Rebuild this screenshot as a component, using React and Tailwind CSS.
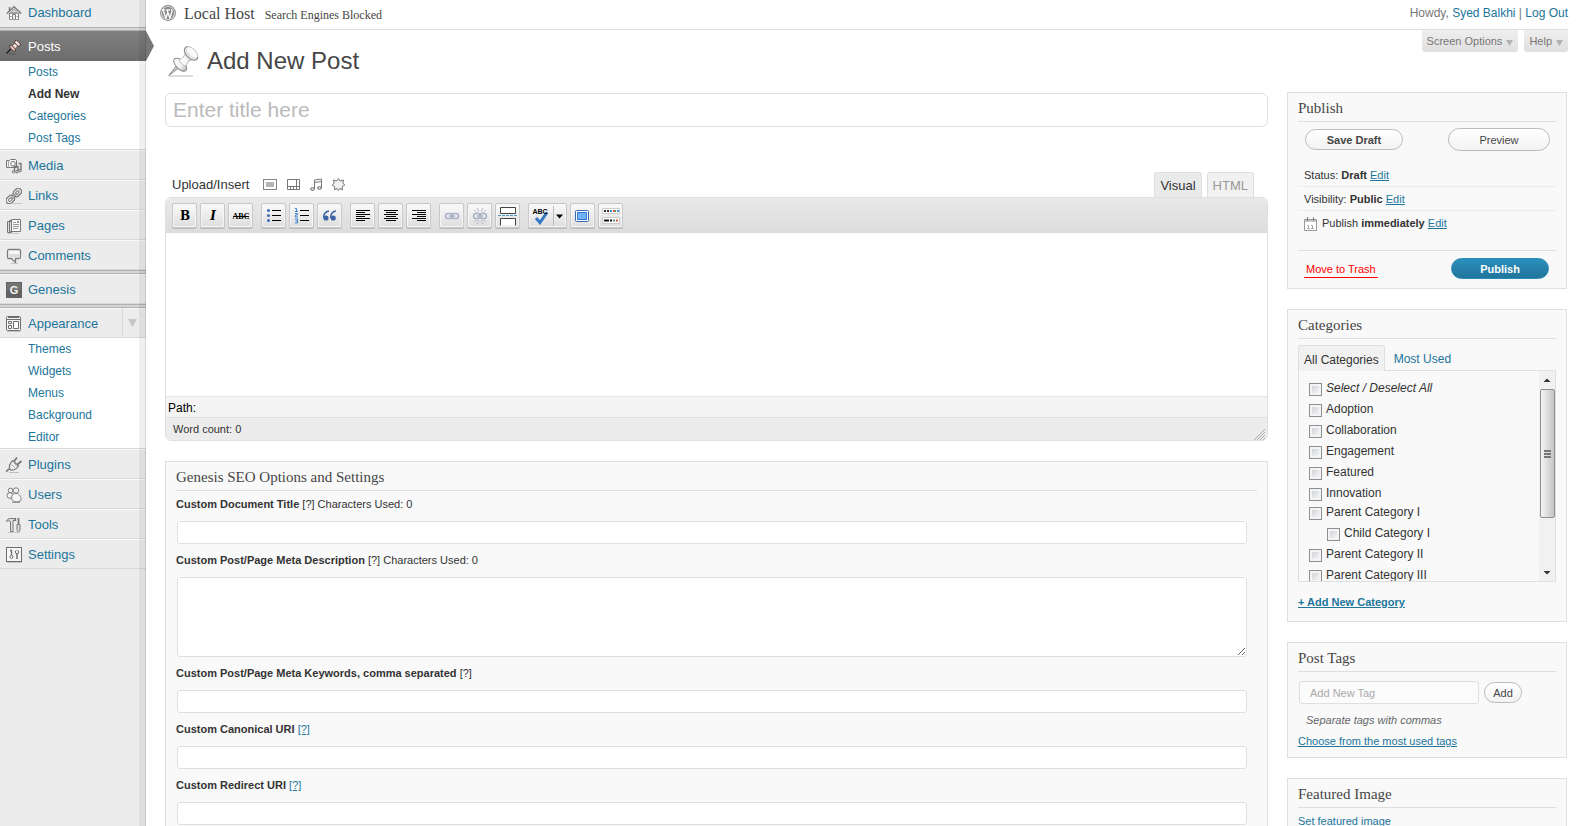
import clsx from 'clsx';

const svgProps = { width: 16, height: 16, viewBox: '0 0 16 16', 'aria-hidden': true, fill: 'none', stroke: '#7d7d7d' };

const DashboardIcon = () => (
  <svg {...svgProps}>
    <path d="M3.5 8v6.5h3v-5h3v5h3V8" fill="#fff" />
    <path d="M3.500 2v4M.8 8.600 8 1.800l7.200 6.800" strokeWidth="1.500" />
    <path d="M4 8.500h8M3.500 11.500h2M10.500 11.500h2M3 14.500h10" stroke="#999" />
    <path d="m4.500 7.500 3.500-3.500 3.500 3.500z" fill="#d0d0d0" stroke="#a5a5a5" />
  </svg>
);

const PostsIcon = () => (
  <svg {...svgProps}>
    <path d="M.5 14.500 5.500 9.200" stroke="#222" strokeWidth="1.500" />
    <ellipse cx="6.600" cy="9.200" rx="4" ry="1.700" transform="rotate(45 6.600 9.200)" fill="#e8bdb4" stroke="#3d3030" strokeWidth=".9" />
    <path d="M6.300 6.800 9.300 3.800l2.900 2.900-3 3z" fill="#f5dcd6" stroke="#5a4441" strokeWidth=".7" />
    <ellipse cx="11.500" cy="4.300" rx="3.600" ry="1.900" transform="rotate(45 11.500 4.300)" fill="#f7e0db" stroke="#3d3030" strokeWidth=".9" />
    <path d="M3 15h7" stroke="#5a5a5a" />
  </svg>
);

const MediaIcon = () => (
  <svg {...svgProps} stroke="#747474">
    <path d="M.5 2.500h3l1-1h5l1 1v7H.500z" fill="#f4f4f4" />
    <circle cx="7" cy="5.800" r="2.300" fill="#fff" />
    <path d="M2.500 2.500v7" stroke="#aaa" />
    <path d="M8.500 13.500V8.500h3.500v5" strokeWidth="1.400" />
    <path d="M12.500 5.500h2.500v7" strokeWidth="1.300" />
    <circle cx="7.600" cy="13.700" r="1.300" fill="#ddd" />
    <circle cx="11" cy="13.700" r="1.300" fill="#ddd" />
    <circle cx="14" cy="12.500" r="1.300" fill="#ddd" />
  </svg>
);

const LinksIcon = () => (
  <svg {...svgProps} stroke="#777">
    <g transform="rotate(-45 8 8)">
      <rect x="-1.800" y="4.600" width="9.200" height="6.600" rx="3.300" fill="#e8e8e8" strokeWidth="1.200" />
      <rect x="8.200" y="4.600" width="9.200" height="6.600" rx="3.300" fill="#e8e8e8" strokeWidth="1.200" />
      <rect x=".8" y="6.800" width="4.200" height="2.200" rx="1.100" fill="#fff" />
      <rect x="10.600" y="6.800" width="4.200" height="2.200" rx="1.100" fill="#fff" />
      <path d="M4.500 8h7" strokeWidth="2.400" />
      <path d="M5 7.800h6" stroke="#ddd" />
    </g>
    <path d="M5 15.500h11" stroke="#c6c6c6" />
  </svg>
);

const PagesIcon = () => (
  <svg {...svgProps} stroke="#777">
    <path d="M1.500 3.500h4v11h-4zM3.500 2.500h3v11h-3z" fill="#dcdcdc" />
    <path d="M5.500 1.500h9v12h-9z" fill="#f8f8f8" />
    <path d="M7 4.500h3M7 6.500h6M7 8.500h6M7 10.500h5M11 3.500h2M11 4.500h2" stroke="#999" />
    <path d="M2 15.500h11" stroke="#c8c8c8" />
  </svg>
);

const CommentsIcon = () => (
  <svg {...svgProps}>
    <path d="M3 1.500h10q1.500 0 1.500 1.500v6q0 1.500-1.500 1.500h-3.500v4L5.500 10.500H3Q1.500 10.500 1.500 9V3Q1.500 1.500 3 1.500z" fill="#f7f7f7" strokeWidth="1.300" />
    <path d="M3 6h10v3.500H3z" fill="#dcdcdc" stroke="none" />
    <path d="M5 15.500h7" stroke="#c4c4c4" />
  </svg>
);

const GenesisIcon = () => (
  <svg {...svgProps} stroke="none">
    <rect width="16" height="16" fill="#626262" />
    <rect x="1" y="1" width="14" height="7" fill="#747474" />
    <text x="8" y="12" textAnchor="middle" fontSize="11" fontWeight="bold" fontFamily="Liberation Sans, sans-serif" fill="#f2f2f2">G</text>
  </svg>
);

const AppearanceIcon = () => (
  <svg {...svgProps} stroke="#6d6d6d">
    <rect x=".5" y=".5" width="14" height="14" rx="1" fill="#f6f6f6" />
    <path d="M1 3.500h13M2 1.500h11" />
    <path d="M2.500 5.500h3v2h-3zM2.500 9.500h3v3h-3zM7.500 5.500h5v7h-5z" fill="#fff" />
    <path d="M1 15.500h14" stroke="#c4c4c4" />
  </svg>
);

const PluginsIcon = () => (
  <svg {...svgProps} stroke="#777">
    <path d="M0 14.500c1.500 0 1-2.500 4-2.800" strokeWidth="1.600" />
    <path d="M4 12.500C2.500 9 4 6 7 3.500l5.500 5.500c-2.500 3.500-5.500 5-8.500 3.500z" fill="#f1f1f1" strokeWidth="1.200" />
    <path d="m8 4.500 3-4M11.500 7.500l4-3.500" strokeWidth="1.800" />
    <path d="M5.500 7.500l4.500 4.500M8 6l3 3.500" stroke="#aaa" />
    <path d="M3 15.500h10" stroke="#bdbdbd" />
  </svg>
);

const UsersIcon = () => (
  <svg {...svgProps}>
    <circle cx="4.500" cy="3.500" r="2.300" fill="#f5f5f5" />
    <ellipse cx="4" cy="8.500" rx="3" ry="2.800" fill="#f5f5f5" />
    <circle cx="10" cy="3.500" r="2.700" fill="#f5f5f5" />
    <path d="M8.500 6.500c-3 1-3.500 5-2 7 2 1.800 6.500 1.800 8.300 0C16 11 14 8 11.500 6.500z" fill="#f5f5f5" />
    <path d="M6 15.500h8" stroke="#999" />
  </svg>
);

const ToolsIcon = () => (
  <svg {...svgProps} stroke="#777">
    <path d="M.5 4.500C1 2.500 2.500 1.500 4.500 1.500h4.500v2H7V14.500H4.500V4.500C3 3.500 1.500 3.500.500 4.500z" fill="#e4e4e4" />
    <path d="M12.500 1v6" strokeWidth="1.800" />
    <path d="M11 7.500h3v6q-1.500 2-3 0z" fill="#ddd" />
    <path d="M9.500 1v3" strokeWidth="1.300" />
    <path d="M2 15.500h12" stroke="#c4c4c4" />
  </svg>
);

const SettingsIcon = () => (
  <svg {...svgProps} stroke="#6e6e6e">
    <rect x=".5" y=".5" width="15" height="14" fill="#f6f6f6" />
    <path d="M4 3.500h2M5.500 3v5" strokeWidth="1.300" />
    <circle cx="5.500" cy="9.800" r="1.500" />
    <circle cx="11" cy="5" r="1.700" />
    <path d="M11 6.700V12" strokeWidth="1.500" />
    <path d="M11 2v3" stroke="#f6f6f6" />
    <path d="M1 15.500h15" stroke="#c4c4c4" />
  </svg>
);

const PushpinIcon = () => (
  <svg width="32" height="32" viewBox="0 0 32 32" aria-hidden="true" fill="none">
    <defs>
      <linearGradient id="pin" x1="0" y1="0" x2="1" y2="0">
        <stop offset="0" stopColor="#fff" />
        <stop offset=".6" stopColor="#f3f3f3" />
        <stop offset="1" stopColor="#b5b5b5" />
      </linearGradient>
    </defs>
    <path d="M1 31h24" stroke="#aaa" strokeWidth=".8" />
    <path d="m.8 30.500 8.200-10.500 2.500 2.500z" fill="#ccc" stroke="#777" strokeWidth=".8" />
    <ellipse cx="12.200" cy="19.700" rx="8.200" ry="4.200" transform="rotate(45 12.200 19.700)" fill="url(#pin)" stroke="#888" />
    <path d="M11.500 14.500c3-1 4.500-3 6-6.500l6.500 6.500c-3 1.500-5.500 3.500-6 6.500-2.500 0-6.500-3.500-6.500-6.500z" fill="url(#pin)" stroke="#aaa" strokeWidth=".8" />
    <ellipse cx="23" cy="8.500" rx="8.200" ry="4.800" transform="rotate(45 23 8.500)" fill="#e4e4e4" stroke="#888" />
    <ellipse cx="24" cy="7.500" rx="7" ry="3.600" transform="rotate(45 24 7.500)" fill="#fbfbfb" stroke="#ccc" strokeWidth=".6" />
  </svg>
);

const WordPressIcon = () => (
  <svg width="16" height="16" viewBox="0 0 16 16" aria-hidden="true" fill="none">
    <circle cx="8" cy="8" r="7.400" fill="#fff" stroke="#8a8a8a" strokeWidth="1.100" />
    <circle cx="8" cy="8" r="6.200" fill="#8c8c8c" />
    <path d="M1.800 4.800h3.400M6.300 4.800h3.800M3 5l2.900 8L7.900 7.600M7 5l2.900 8 2.100-6.200q.3-1.500-.7-2.600" stroke="#fff" strokeWidth="1.300" />
  </svg>
);

const menuBlocks = [
  [
    {
      label: 'Posts', icon: PostsIcon, active: true,
      children: ['Posts', 'Add New', 'Categories', 'Post Tags'],
    },
    { label: 'Media', icon: MediaIcon },
    { label: 'Links', icon: LinksIcon },
    { label: 'Pages', icon: PagesIcon },
    { label: 'Comments', icon: CommentsIcon },
  ],
  [{ label: 'Genesis', icon: GenesisIcon }],
  [
    {
      label: 'Appearance', icon: AppearanceIcon, toggle: true,
      children: ['Themes', 'Widgets', 'Menus', 'Background', 'Editor'],
    },
    { label: 'Plugins', icon: PluginsIcon },
    { label: 'Users', icon: UsersIcon },
    { label: 'Tools', icon: ToolsIcon },
    { label: 'Settings', icon: SettingsIcon },
  ],
];

const MenuSeparator = () => <div className="h-1 border-y border-[#b0b0b0] bg-[#d6d6d6]" />;

function MenuItem({ label, icon: Icon, active, toggle, children }) {
  return (
    <li>
      <div
        className={clsx(
          'relative flex h-[30px] items-center border-b',
          active ? 'border-[#6d6d6d] bg-linear-to-b from-[#808080] to-[#6d6d6d]' : 'border-[#d9d9d9] bg-[#ececec] shadow-[inset_0_1px_0_#f9f9f9]'
        )}
      >
        <a href="#" className={clsx('flex flex-1 items-center gap-[6px] pt-[2px] pl-[6px] text-[13px]', active ? 'text-white' : 'text-[#21759b]')}>
          <Icon />
          {label}
        </a>
        {toggle && (
          <button type="button" aria-label="Toggle submenu" className="flex h-full w-6 items-center border-l border-[#d9d9d9] pl-[5px]">
            <svg width="9" height="8" viewBox="0 0 9 8" aria-hidden="true"><path d="M0 0h9L4.500 8z" fill="#c6c6c6" /></svg>
          </button>
        )}
        {active && (
          <svg className="absolute top-0 left-full z-10" width="8" height="30" viewBox="0 0 8 30" aria-hidden="true">
            <path d="M0 0 8 15 0 30z" fill="#767676" />
          </svg>
        )}
      </div>
      {children && (
        <ul className="border-b border-[#d9d9d9] bg-white">
          {children.map((child) => (
            <li key={child} className="h-[22px] pl-7 text-xs leading-[22px]">
              <a href="#" className={child === 'Add New' ? 'font-bold text-[#333]' : 'text-[#21759b]'}>{child}</a>
            </li>
          ))}
        </ul>
      )}
    </li>
  );
}

function Sidebar() {
  return (
    <nav className="relative w-[146px] shrink-0 bg-[#ececec]">
      <a href="#" className="flex h-[27px] items-center gap-[6px] pb-px pl-[6px] text-[13px] text-[#21759b]">
        <DashboardIcon />
        Dashboard
      </a>
      {menuBlocks.map((items) => (
        <div key={items[0].label}>
          <MenuSeparator />
          <ul>
            {items.map((item) => <MenuItem key={item.label} {...item} />)}
          </ul>
        </div>
      ))}
      <div className="pointer-events-none absolute inset-y-0 right-0 w-[7px] border-r border-black/10 bg-black/6" />
    </nav>
  );
}

const Link = ({ children, className }) => (
  <a href="#" className={clsx('text-[#21759b]', className)}>{children}</a>
);

const Caret = () => (
  <svg width="7" height="6" viewBox="0 0 7 6" aria-hidden="true" className="mt-[3px]"><path d="M0 0h7L3.500 6z" fill="#b3b3b3" /></svg>
);

function MetaTab({ children }) {
  return (
    <button type="button" className="flex h-[22px] items-center gap-1 rounded-b-[3px] bg-linear-to-b from-[#efefef] to-[#dfdfdf] px-[5px] text-[11px] text-[#777]">
      {children}
      <Caret />
    </button>
  );
}

function PillButton({ children, className }) {
  return (
    <button type="button" className={clsx('rounded-full border border-[#bbb] bg-linear-to-b from-white to-[#f2f2f2] pt-px text-[11px] text-[#464646]', className)}>
      {children}
    </button>
  );
}

function Box({ title, children }) {
  return (
    <section className="border border-[#dfdfdf] bg-[#f9f9f9] px-[10px]">
      <h3 className="h-[29px] border-b border-[#dfdfdf] pt-1 font-['Liberation_Serif',serif] text-[15px] leading-[22px] text-[#464646]">{title}</h3>
      {children}
    </section>
  );
}

function ToolButton({ label, wide, children }) {
  return (
    <button
      type="button"
      aria-label={label}
      className={clsx(
        'flex h-[25px] items-center justify-center rounded-[2px] border border-[#c8c8c8] bg-linear-to-b from-[#fafafa] to-[#dedede] shadow-[0_1px_0_#bbb,inset_0_0_0_1px_#f6f6f6]',
        wide ? 'w-[39px]' : 'w-[25px]'
      )}
    >
      <svg width={wide ? 36 : 20} height="20" viewBox={wide ? '0 0 36 20' : '0 0 20 20'} fill="none" stroke="#000" className="shrink-0">
        {children}
      </svg>
    </button>
  );
}

const glyph = { textAnchor: 'middle', stroke: 'none', fill: '#000', fontWeight: 'bold' };
const serif = 'Liberation Serif, serif';

const ChainIcon = () => (
  <g stroke="#a9b3c3" strokeWidth="1.500">
    <rect x="3.500" y="7.500" width="7" height="5" rx="2.500" />
    <rect x="9.500" y="7.500" width="7" height="5" rx="2.500" />
    <path d="M7 10h6" />
  </g>
);

const toolGroups = [
  [
    { label: 'Bold', art: <text x="10" y="14" fontSize="12" fontFamily="DejaVu Serif, serif" {...glyph}>B</text> },
    { label: 'Italic', art: <text x="10" y="14" fontSize="12" fontStyle="italic" fontFamily="DejaVu Serif, serif" {...glyph}>I</text> },
    {
      label: 'Strikethrough',
      art: <><text x="10" y="13" fontSize="8" fontFamily={serif} {...glyph}>ABC</text><path d="M2 10.500h16" /></>,
    },
  ],
  [
    {
      label: 'Unordered list',
      art: (
        <>
          <path d="M8 4.500h9M8 9.500h9M8 14.500h9" />
          <g fill="#3d6cb5" stroke="none"><circle cx="4.500" cy="4.500" r="1.500" /><circle cx="4.500" cy="9.500" r="1.500" /><circle cx="4.500" cy="14.500" r="1.500" /></g>
        </>
      ),
    },
    {
      label: 'Ordered list',
      art: (
        <>
          <path d="M8 4.500h9M8 9.500h9M8 14.500h9" />
          <path d="M3 2.500h1.500v3M3 5.500h3M3 7.500h2.500v1.500H3.500v2H6M3 13h2.500v4H3M3.500 15h2" stroke="#3f86cf" />
        </>
      ),
    },
    {
      label: 'Blockquote',
      art: (
        <>
          <path d="M9 5C5.500 5.500 3.500 8 3.700 12" stroke="#3d64a5" strokeWidth="1.500" />
          <circle cx="6" cy="12" r="2.600" fill="#3d64a5" stroke="none" />
          <path d="M16 5c-3.500.5-5.500 3-5.300 7" stroke="#3d64a5" strokeWidth="1.500" />
          <circle cx="13.200" cy="12" r="2.600" fill="#3d64a5" stroke="none" />
        </>
      ),
    },
  ],
  [
    { label: 'Align left', art: <path d="M3 4.500h14M3 6.500h9M3 8.500h14M3 10.500h9M3 12.500h14M3 14.500h9" /> },
    { label: 'Align center', art: <path d="M3 4.500h14M5 6.500h10M3 8.500h14M5 10.500h10M3 12.500h14M5 14.500h10" /> },
    { label: 'Align right', art: <path d="M3 4.500h14M8 6.500h9M3 8.500h14M8 10.500h9M3 12.500h14M8 14.500h9" /> },
  ],
  [
    { label: 'Insert link', art: <ChainIcon /> },
    {
      label: 'Unlink',
      art: <><ChainIcon /><path d="M7 2l2 4M13 2l-2 4M4 4l3 3M16 4l-3 3M7 18l2-4M13 18l-2-4M4 16l3-2M16 16l-3-2" stroke="#b9bec8" /></>,
    },
    {
      label: 'Insert More tag',
      art: (
        <>
          <path d="M2.500 1.500h15v6h-15zM2.500 19.500v-7h15v7" fill="#fff" stroke="#444" />
          <path d="M0 9.500h20" stroke="#4d9ac2" strokeDasharray="3 1" />
        </>
      ),
    },
  ],
  [
    {
      label: 'Toggle spellchecker',
      wide: true,
      art: (
        <>
          <path d="m6 12 4 4.500L17 6.500" stroke="#3677c4" strokeWidth="3" />
          <text x="10" y="8" fontSize="7" fontFamily="Liberation Sans, sans-serif" {...glyph}>ABC</text>
          <path d="M23.500-3v26" stroke="#bbb" />
          <path d="M26 8.500h7l-3.500 4z" fill="#000" stroke="none" />
        </>
      ),
    },
    {
      label: 'Toggle fullscreen',
      art: (
        <>
          <rect x="2.500" y="4.500" width="13" height="11" rx="1" fill="#fff" stroke="#3c67b7" />
          <rect x="4.500" y="6.500" width="9" height="7" fill="#6fb2f5" stroke="#2f78da" />
        </>
      ),
    },
    {
      label: 'Kitchen sink',
      art: (
        <>
          <path d="M1.500 2.500h17v5h-17zM1.500 11.500h17v6h-17z" fill="#fafafa" stroke="#ccc" />
          <path d="M3 5h2m1 0h2" strokeWidth="2" stroke="#333" />
          <path d="M9 5h2m5 0h2" strokeWidth="2" stroke="#3f8fe0" />
          <path d="M12 5h2" strokeWidth="2" stroke="#d0603c" />
          <path d="M14 5h1" strokeWidth="2" stroke="#4e9b6d" />
          <path d="M3 14.500h5m1 0h2" strokeWidth="2" stroke="#111" />
          <path d="M12 14.500h2" strokeWidth="2" stroke="#4e9b6d" />
          <path d="M15 14.500h2" strokeWidth="2" stroke="#d0603c" />
        </>
      ),
    },
  ],
];

function Grip({ color, size }) {
  return (
    <svg width={size} height={size} viewBox="0 0 12 12" stroke={color} aria-hidden="true">
      <path d="M1 12 12 1M4 12l8-8M7 12l5-5M10 12l2-2" />
    </svg>
  );
}

function Editor() {
  return (
    <div>
      <div className="flex items-end pr-[14px] pl-[7px]">
        <div className="flex h-[25px] flex-1 items-center gap-[10px] text-[13px]">
          <span className="mr-1">Upload/Insert</span>
          <button type="button" aria-label="Add an image">
            <svg width="14" height="12" viewBox="0 0 14 12" fill="none" stroke="#858585"><rect x=".5" y=".5" width="13" height="10" fill="#fff" /><rect x="3" y="3" width="8" height="5" fill="#b5b5b5" stroke="none" /></svg>
          </button>
          <button type="button" aria-label="Add video">
            <svg width="13" height="12" viewBox="0 0 13 12" fill="none" stroke="#777"><path d="M.5.5h12v10H.500zM9.500.5v7M.5 7.500h12M3.500 8v2M6.500 8v2M9.500 8v2" /></svg>
          </button>
          <button type="button" aria-label="Add audio">
            <svg width="12" height="13" viewBox="0 0 12 13" fill="none" stroke="#777"><path d="M4.500 11V2l7-1v9M4.500 4.500l7-1" /><ellipse cx="2.500" cy="11" rx="2" ry="1.400" fill="#ddd" /><ellipse cx="9.500" cy="10" rx="2" ry="1.400" fill="#ddd" /></svg>
          </button>
          <button type="button" aria-label="Add media">
            <svg width="13" height="13" viewBox="0 0 13 13" fill="none" stroke="#777"><path d="M6.500.5 8.200 3 11.500 2 10.800 5 12.800 7 10.300 8.500 10.500 11.800 7.800 10.500 6.500 12.500 5.200 10.500 2.500 11.800 2.700 8.500.2 7 2.200 5 1.500 2 4.800 3z" fill="#f1f1f1" /></svg>
          </button>
        </div>
        <div className="flex gap-[5px] text-[13px]">
          <button type="button" className="h-[25px] rounded-t-[3px] border border-b-0 border-[#dfdfdf] bg-[#e9eaea] px-[5px] pt-[2px] text-[#333]">Visual</button>
          <button type="button" className="h-[25px] rounded-t-[3px] border border-b-0 border-[#dfdfdf] bg-[#f1f1f1] px-[5px] pt-[2px] text-[#999]">HTML</button>
        </div>
      </div>
      <div className="overflow-hidden rounded-[6px] border border-[#dfdfdf]">
        <div className="flex flex-wrap gap-2 bg-linear-to-b from-[#e9e9e9] to-[#dcdcdc] px-[6px] py-[5px]">
          {toolGroups.map((group) => (
            <div key={group[0].label} className="flex gap-[3px]">
              {group.map((tool) => (
                <ToolButton key={tool.label} label={tool.label} wide={tool.wide}>{tool.art}</ToolButton>
              ))}
            </div>
          ))}
        </div>
        <textarea aria-label="Post content" className="block h-[163px] w-full resize-none bg-white p-2 outline-none" />
        <div className="h-[21px] border-t border-[#e5e5e5] bg-[#f4f4f4] pl-[2px] text-xs leading-[22px] text-black">Path:</div>
        <div className="flex h-[23px] items-center justify-between border-t border-[#dfdfdf] bg-[#ececec] pr-[2px] pl-[7px] text-[11px]">
          Word count: 0
          <span className="self-end"><Grip color="#aaa" size={12} /></span>
        </div>
      </div>
    </div>
  );
}

const fieldClass = 'block w-full rounded-[3px] border border-[#dfdfdf] bg-white px-1 outline-none';

const seoFields = [
  { id: 'seo-title', label: 'Custom Document Title', count: true },
  { id: 'seo-description', label: 'Custom Post/Page Meta Description', count: true, multiline: true },
  { id: 'seo-keywords', label: 'Custom Post/Page Meta Keywords, comma separated' },
  { id: 'seo-canonical', label: 'Custom Canonical URI', help: true },
  { id: 'seo-redirect', label: 'Custom Redirect URI', help: true },
];

function SeoBox() {
  return (
    <Box title="Genesis SEO Options and Settings">
      <div className="flex flex-col gap-[7px] pt-1 pb-4">
        {seoFields.map(({ id, label, count, multiline, help }) => (
          <div key={id}>
            <div className="mb-2 h-[18px] text-[11px] leading-[18px]">
              <label htmlFor={id} className="font-bold">{label}</label>{' '}
              {help ? <Link className="underline">[?]</Link> : '[?]'}
              {count && ' Characters Used: 0'}
            </div>
            <div className="pr-[10px] pl-px">
              {multiline
                ? <textarea id={id} className={clsx(fieldClass, 'h-20 resize-y')} />
                : <input id={id} type="text" className={clsx(fieldClass, 'h-[23px]')} />}
            </div>
          </div>
        ))}
      </div>
    </Box>
  );
}

const CalendarIcon = () => (
  <svg width="13" height="14" viewBox="0 0 13 14" aria-hidden="true" fill="none" stroke="#999">
    <path d="M.5 2.500h12v11H.500z" fill="#fff" />
    <path d="M1 4h11" strokeWidth="2" stroke="#c9c9c9" />
    <path d="M3.500 0v4M9.500 0v4" stroke="#777" />
    <path d="M3 8.500h1.500V12M3 11.500h3M7 8.500h1.500V12M7 11.500h3" stroke="#aaa" />
  </svg>
);

function PublishBox() {
  const row = 'flex h-6 items-center gap-[5px] pt-px pl-[6px] text-[11px]';
  return (
    <Box title="Publish">
      <div className="flex items-center justify-between pt-[6px] pr-[6px] pb-3 pl-[7px]">
        <PillButton className="h-[21px] w-[98px] font-bold">Save Draft</PillButton>
        <PillButton className="h-[23px] w-[102px]">Preview</PillButton>
      </div>
      <div className={clsx(row, 'border-b border-[#ececec]')}>
        <span>Status: <b>Draft</b> <Link className="underline">Edit</Link></span>
      </div>
      <div className={clsx(row, 'border-b border-[#ececec]')}>
        <span>Visibility: <b>Public</b> <Link className="underline">Edit</Link></span>
      </div>
      <div className={row}>
        <CalendarIcon />
        <span>Publish <b>immediately</b> <Link className="underline">Edit</Link></span>
      </div>
      <div className="mt-[15px] flex items-center justify-between border-t border-[#dfdfdf] pt-[7px] pr-[7px] pb-[9px] pl-[6px]">
        <a href="#" className="border-b border-[#f00] px-[2px] pt-[2px] text-[11px] leading-4 text-[#f00]">Move to Trash</a>
        <button type="button" className="h-[21px] w-[98px] rounded-full border border-[#298cba] bg-linear-to-b from-[#2a8fbd] to-[#21759b] pt-px text-[11px] font-bold text-white">Publish</button>
      </div>
    </Box>
  );
}

const categories = ['Adoption', 'Collaboration', 'Engagement', 'Featured', 'Innovation', 'Parent Category I', 'Child Category I', 'Parent Category II', 'Parent Category III'];

function CategoryOption({ name, className }) {
  return (
    <label className={clsx('flex h-[21px] shrink-0 items-center gap-1 pb-[2px]', className)}>
      <input type="checkbox" className="mt-1 size-[13px] appearance-none border border-[#8e8f8f] bg-linear-to-br from-[#c6cad0] to-white shadow-[inset_0_0_0_2px_#f4f4f4]" />
      {name}
    </label>
  );
}

function CategoriesBox() {
  return (
    <Box title="Categories">
      <div className="flex pt-[6px] text-xs leading-[22px]">
        <button type="button" className="relative z-10 -mb-px rounded-t-[3px] border border-b-0 border-[#dfdfdf] bg-[#f1f1f1] px-[5px] pt-[3px]">All Categories</button>
        <button type="button" className="border border-b-0 border-transparent px-2 pt-[2px] text-[#21759b]">Most Used</button>
      </div>
      <div className="flex h-[212px] border border-[#dfdfdf] text-xs">
        <div className="flex flex-1 flex-col overflow-hidden pt-[7px] pl-[10px]">
          <CategoryOption name="Select / Deselect All" className="italic" />
          {categories.map((name) => (
            <CategoryOption
              key={name}
              name={name}
              className={clsx(name === 'Parent Category I' && '-mt-[2px]', name === 'Child Category I' && 'pl-[18px]')}
            />
          ))}
        </div>
        <div aria-hidden="true" className="flex w-4 flex-col items-center bg-[#f1f1f1]">
          <svg width="16" height="18" viewBox="0 0 16 18"><path d="M4.500 11 8 7.500l3.500 3.500z" fill="#333" /></svg>
          <div className="flex h-[129px] w-[15px] flex-col items-center justify-center gap-px rounded-[2px] border border-[#8f8f8f] bg-linear-to-r from-[#f5f5f5] to-[#c4c4c8]">
            <div className="h-[2px] w-[7px] bg-[#777]" />
            <div className="h-[2px] w-[7px] bg-[#777]" />
            <div className="h-[2px] w-[7px] bg-[#777]" />
          </div>
          <svg className="mt-auto" width="16" height="17" viewBox="0 0 16 17"><path d="M4.500 7 8 10.500 11.500 7z" fill="#333" /></svg>
        </div>
      </div>
      <div className="pt-3 pb-[11px] text-[11px] leading-4">
        <Link className="font-bold underline">+ Add New Category</Link>
      </div>
    </Box>
  );
}

function TagsBox() {
  return (
    <Box title="Post Tags">
      <div className="flex items-center gap-[5px] pt-[9px] pl-px">
        <input type="text" aria-label="Add New Tag" placeholder="Add New Tag" className="h-[23px] w-[180px] rounded-[3px] border border-[#dfdfdf] bg-white/40 px-[10px] text-[11px] outline-none placeholder:text-[#aaa]" />
        <PillButton className="h-[21px] w-[38px]">Add</PillButton>
      </div>
      <p className="pt-2 pl-2 text-[11px] leading-4 text-[#666] italic">Separate tags with commas</p>
      <p className="pt-[5px] pb-2 text-[11px] leading-4"><Link className="underline">Choose from the most used tags</Link></p>
    </Box>
  );
}

export default function App() {
  return (
    <div className="flex h-screen overflow-hidden bg-white font-['Liberation_Sans',Arial,sans-serif] text-[#333]">
      <Sidebar />
      <div className="min-w-0 flex-1 pr-[11px] pl-[14px]">
        <header className="flex h-[30px] items-center justify-between border-b border-[#dfdfdf] pb-[3px]">
          <div className="flex items-center gap-2 font-['Liberation_Serif',serif] text-[#464646]">
            <WordPressIcon />
            <h1 className="flex items-baseline gap-[10px] pt-[2px] text-base">
              <a href="#">Local Host</a>
              <a href="#" className="text-xs">Search Engines Blocked</a>
            </h1>
          </div>
          <p className="text-xs text-[#777]">Howdy, <Link>Syed Balkhi</Link> | <Link>Log Out</Link></p>
        </header>

        <div className="flex h-[62px] items-start justify-between">
          <h2 className="flex items-center gap-[7px] pt-[15px] pl-2 text-2xl leading-8 text-[#464646]">
            <PushpinIcon />
            Add New Post
          </h2>
          <div className="flex gap-[6px]">
            <MetaTab>Screen Options</MetaTab>
            <MetaTab>Help</MetaTab>
          </div>
        </div>

        <main className="flex items-start gap-[19px] pr-px pl-[5px]">
          <div className="flex min-w-0 flex-1 flex-col pt-px">
            <input type="text" aria-label="Enter title here" placeholder="Enter title here" className="mb-[45px] h-[34px] w-full rounded-[6px] border border-[#dfdfdf] px-[7px] text-[21px] outline-none placeholder:text-[#bbb]" />
            <Editor />
            <div className="mt-5"><SeoBox /></div>
          </div>
          <aside className="flex w-[280px] shrink-0 flex-col gap-5">
            <PublishBox />
            <CategoriesBox />
            <TagsBox />
            <Box title="Featured Image">
              <p className="pt-[5px] pb-3 text-[11px] leading-4"><Link>Set featured image</Link></p>
            </Box>
          </aside>
        </main>
      </div>
    </div>
  );
}
